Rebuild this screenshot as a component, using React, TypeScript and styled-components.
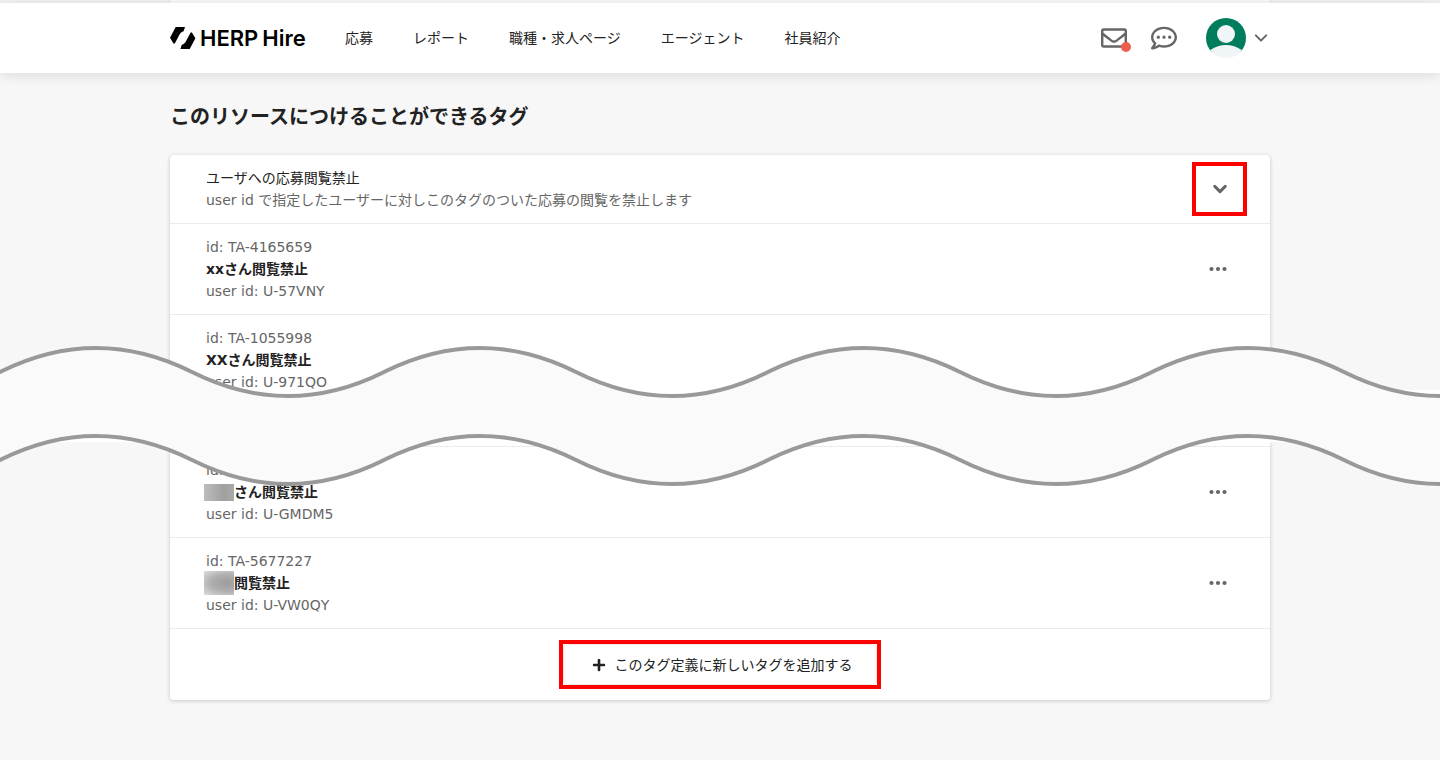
import React from "react";
import styled, { createGlobalStyle } from "styled-components";
import { FaRegEnvelope, FaRegCommentDots, FaPlus } from "react-icons/fa";

const Global = createGlobalStyle`
  *, *::before, *::after { box-sizing: border-box; }
  body {
    margin: 0;
    background: #f7f7f7;
    color: #222;
    font-family: "DejaVu Sans", "Noto Sans CJK JP", sans-serif;
    font-size: 14px;
    line-height: 22px;
  }
  button { font: inherit; color: inherit; border: 0; background: none; padding: 0; cursor: pointer; }
  h1, p { margin: 0; padding: 0; }
  svg { display: block; }
`;

const Page = styled.div`
  min-height: 100vh;
  padding-bottom: 56px;
`;

const Container = styled.div`
  width: 100%;
  max-width: 1100px;
  margin: 0 auto;
`;

const TopStrip = styled.div`
  background: #f3f3f3;
`;

const TopStripInner = styled(Container)`
  height: 3px;
  background: #f9f9f9;
  box-shadow: 0 0 2px rgba(0, 0, 0, 0.2);
`;

const Header = styled.header`
  position: relative;
  background: #fff;
  box-shadow: 0 2px 12px rgba(0, 0, 0, 0.12);
`;

const HeaderInner = styled(Container)`
  display: flex;
  align-items: center;
  height: 70px;
`;

const Logo = styled.a`
  display: flex;
  align-items: center;
  gap: 4px;
  width: 136px;
  margin-right: 39px;
  color: #000;
  text-decoration: none;
`;

const LogoText = styled.span`
  display: flex;
  gap: 4px;
  font-family: Inter, sans-serif;
  font-size: 22px;
  font-weight: 600;
`;

const Nav = styled.nav`
  display: flex;
  flex: 1;
  gap: 40px;
`;

const NavLink = styled.a`
  color: #222;
  text-decoration: none;
  white-space: nowrap;
`;

const Tools = styled.div`
  display: flex;
  align-items: center;
  color: #666;
`;

const IconButton = styled.button<{ $gap: number }>`
  position: relative;
  display: flex;
  margin-right: ${(p) => p.$gap}px;
`;

const Badge = styled.span`
  position: absolute;
  right: -4px;
  bottom: -1px;
  width: 10px;
  height: 10px;
  border-radius: 50%;
  background: #ee5f4b;
`;

const Account = styled.button`
  display: flex;
  align-items: center;
  gap: 8px;
  padding-right: 2px;
`;

const Title = styled.h1`
  padding: 30px 0 24px;
  font-size: 20px;
  line-height: 28px;
  font-weight: 700;
`;

const Card = styled(Container)<{ $part: "top" | "bottom" }>`
  background: #fff;
  border-radius: ${(p) => (p.$part === "top" ? "4px 4px 0 0" : "0 0 4px 4px")};
  padding-top: ${(p) => (p.$part === "top" ? 0 : 4)}px;
  box-shadow: 0 1px 4px rgba(0, 0, 0, 0.2);
`;

const Row = styled.div<{ $divided?: boolean }>`
  display: flex;
  align-items: center;
  justify-content: space-between;
  padding: 12px 36px;
  border-top: ${(p) => (p.$divided ? "1px solid #ebebeb" : "0")};
`;

const Muted = styled.p`
  color: #666;
`;

const Name = styled.p`
  display: flex;
  align-items: center;
  height: 22px;
  font-weight: 700;
`;

const Redacted = styled.span<{ $tall?: boolean }>`
  width: 30px;
  height: ${(p) => (p.$tall ? 24 : 17)}px;
  margin-left: -2px;
  background: ${(p) =>
    p.$tall
      ? "radial-gradient(ellipse at 75% 50%, #9c9c9c 0%, #b0b0b0 50%, #dedede 100%)"
      : "linear-gradient(90deg, #bdbdbd, #a0a0a0 65%, #aaa)"};
`;

const MenuButton = styled.button`
  display: flex;
  align-items: center;
  justify-content: center;
  width: 32px;
  height: 32px;
  color: #666;
`;

const ToggleButton = styled.button`
  display: flex;
  align-items: center;
  justify-content: center;
  width: 55px;
  height: 54px;
  margin: -8px -13px -8px 0;
  border: 4px solid #f00;
  color: #666;
`;

const Footer = styled.div`
  display: flex;
  justify-content: center;
  padding: 11px 0;
  border-top: 1px solid #ebebeb;
`;

const Highlight = styled.div`
  border: 4px solid #f00;
`;

const AddButton = styled.button`
  display: flex;
  align-items: center;
  justify-content: center;
  gap: 9px;
  width: 314px;
  height: 41px;
  padding-left: 4px;
  border: 1px solid #ebebeb;
  border-radius: 4px;
`;

const Break = styled.div`
  position: relative;
  height: 52px;
  margin: -15px 0 0;
  background: #fff;
`;

const Wave = styled.svg`
  position: absolute;
  left: 0;
  top: -45px;
  width: 100%;
  height: 142px;
`;

const ARC = "Q96 -21 192 27 Q288 75 384 27";

const Chevron = ({ width, weight }: { width: number; weight: number }) => (
  <svg width={width} height={width} viewBox="0 0 14 14" fill="none" stroke="currentColor" strokeWidth={weight} strokeLinecap="round" strokeLinejoin="round" aria-hidden="true">
    <path d="M1.8 4.4 7 9.6l5.2-5.2" />
  </svg>
);

const Dots = () => (
  <svg width="18" height="6" viewBox="0 0 18 6" fill="currentColor" aria-hidden="true">
    <circle cx="2.5" cy="3" r="2.1" />
    <circle cx="9" cy="3" r="2.1" />
    <circle cx="15.5" cy="3" r="2.1" />
  </svg>
);

const LogoMark = () => (
  <svg width="26" height="22" viewBox="0 0 26 22" fill="#000" aria-hidden="true">
    <path d="M5.7 0H15l-1.4 4.3c-2 .4-3.200 1.600-4.200 3.400L4.800 16.500H3.500L0 10.800z" />
    <path d="M5.7 0H15l-1.4 4.3c-2 .4-3.200 1.600-4.200 3.400L4.800 16.500H3.500L0 10.800z" transform="rotate(180 12.700 11)" />
  </svg>
);

const Avatar = () => (
  <svg width="40" height="40" viewBox="0 0 40 40" aria-hidden="true">
    <clipPath id="avatar-clip"><circle cx="20" cy="20" r="20" /></clipPath>
    <g clipPath="url(#avatar-clip)">
      <rect width="40" height="34" fill="#007d5c" />
      <circle cx="20" cy="16" r="9" fill="#f0f5f7" />
      <ellipse cx="20" cy="42" rx="21" ry="15" fill="#f0f5f7" />
    </g>
  </svg>
);

const TagRow = ({ id, name, user, redacted }: { id: string; name: string; user: string; redacted?: "short" | "tall" }) => (
  <Row $divided>
    <div>
      <Muted>id: {id}</Muted>
      <Name>
        {redacted && <Redacted $tall={redacted === "tall"} />}
        {name}
      </Name>
      <Muted>user id: {user}</Muted>
    </div>
    <MenuButton aria-label="メニュー"><Dots /></MenuButton>
  </Row>
);

const links = ["応募", "レポート", "職種・求人ページ", "エージェント", "社員紹介"];

export default function App() {
  return (
    <>
      <Global />
      <Page>
        <TopStrip><TopStripInner /></TopStrip>
        <Header>
          <HeaderInner>
            <Logo href="#">
              <LogoMark />
              <LogoText><span>HERP</span><span>Hire</span></LogoText>
            </Logo>
            <Nav>
              {links.map((l) => <NavLink key={l} href="#">{l}</NavLink>)}
            </Nav>
            <Tools>
              <IconButton $gap={24} aria-label="メール"><FaRegEnvelope size={26} /><Badge /></IconButton>
              <IconButton $gap={29} aria-label="メッセージ"><FaRegCommentDots size={26} /></IconButton>
              <Account aria-label="アカウント"><Avatar /><Chevron width={14} weight={2} /></Account>
            </Tools>
          </HeaderInner>
        </Header>
        <main>
          <Container><Title>このリソースにつけることができるタグ</Title></Container>
          <Card $part="top">
            <Row>
              <div>
                <p>ユーザへの応募閲覧禁止</p>
                <Muted>user id で指定したユーザーに対しこのタグのついた応募の閲覧を禁止します</Muted>
              </div>
              <ToggleButton aria-label="開閉"><Chevron width={14} weight={3} /></ToggleButton>
            </Row>
            <TagRow id="TA-4165659" name="xxさん閲覧禁止" user="U-57VNY" />
            <TagRow id="TA-1055998" name="XXさん閲覧禁止" user="U-971QO" />
          </Card>
          <Break>
            <Wave aria-hidden="true">
              <defs>
                <pattern id="wave" width="384" height="142" patternUnits="userSpaceOnUse">
                  <path d={`M0 27 ${ARC} V115 Q288 163 192 115 Q96 67 0 115z`} fill="#fafafa" />
                  <g fill="none" stroke="#999" strokeWidth="4">
                    <path d={`M-8 31 L0 27 ${ARC} L392 23`} />
                    <path d={`M-8 31 L0 27 ${ARC} L392 23`} transform="translate(0 88)" />
                  </g>
                </pattern>
              </defs>
              <rect width="100%" height="142" fill="url(#wave)" />
            </Wave>
          </Break>
          <Card $part="bottom">
            <TagRow id="TA-5677226" name="さん閲覧禁止" user="U-GMDM5" redacted="short" />
            <TagRow id="TA-5677227" name="閲覧禁止" user="U-VW0QY" redacted="tall" />
            <Footer>
              <Highlight>
                <AddButton><FaPlus size={14} />このタグ定義に新しいタグを追加する</AddButton>
              </Highlight>
            </Footer>
          </Card>
        </main>
      </Page>
    </>
  );
}
